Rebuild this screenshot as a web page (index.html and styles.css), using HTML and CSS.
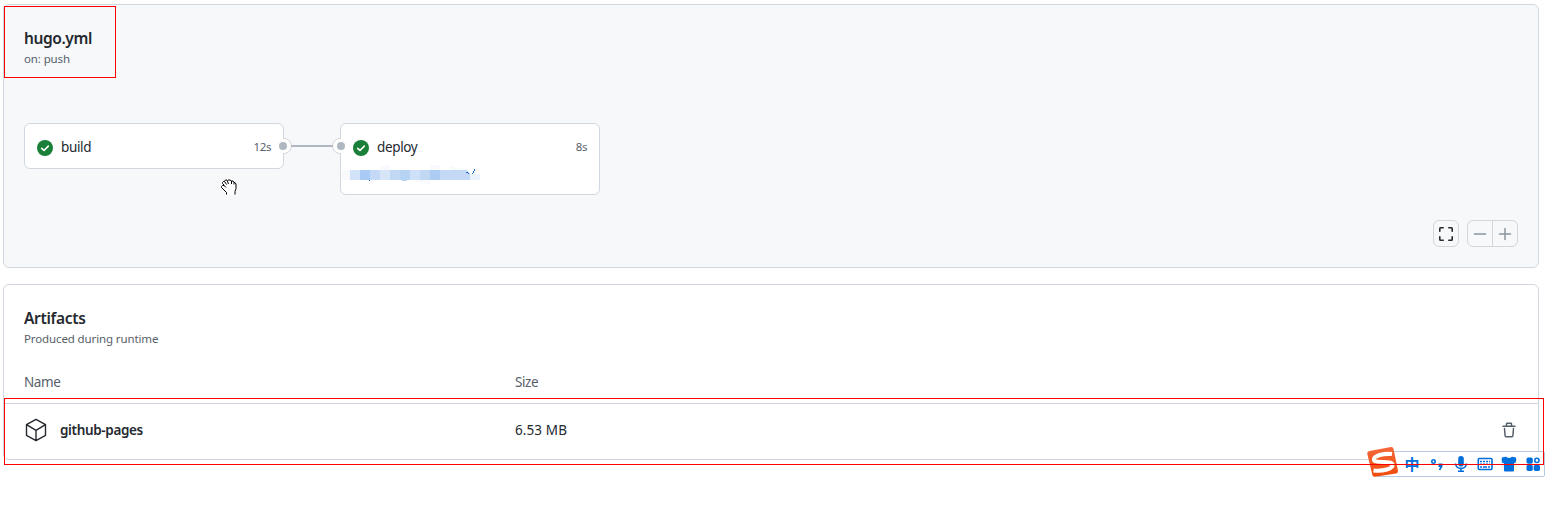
FILE: index.html
```html
<!DOCTYPE html>
<html lang="en">
<head>
<meta charset="utf-8">
<title>Workflow run</title>
<link rel="stylesheet" href="styles.css">
</head>
<body>
<main class="page">
  <section class="panel workflow">
    <header>
      <h2 class="title title-file">hugo.yml</h2>
      <p class="subtitle">on: push</p>
    </header>
    <div class="graph">
      <div class="job">
        <div class="job-row">
          <svg class="check" viewBox="0 0 16 16"><circle cx="8" cy="8" r="8" fill="#1a7f37"/><path d="M4.7 8.3 7 10.5l4.3-4.4" fill="none" stroke="#fff" stroke-width="1.6" stroke-linecap="round" stroke-linejoin="round"/></svg>
          <span class="job-name">build</span><span class="time">12s</span>
        </div>
      </div>
      <svg class="connector" viewBox="0 0 72 18">
        <path d="M8 1.5A7.5 7.5 0 0 1 8 16.5M64 1.5A7.5 7.5 0 0 0 64 16.5" fill="#fff" stroke="#d0d7de"/>
        <path d="M6 2h2v14H6zM64 2h2v14h-2z" fill="#fff"/>
        <path d="M15 9h42" stroke="#afb8c1" stroke-width="2"/>
        <circle cx="7" cy="9" r="4" fill="#afb8c1"/><circle cx="65" cy="9" r="4" fill="#afb8c1"/>
      </svg>
      <div class="job job-deploy">
        <div class="job-row">
          <svg class="check" viewBox="0 0 16 16"><circle cx="8" cy="8" r="8" fill="#1a7f37"/><path d="M4.7 8.3 7 10.5l4.3-4.4" fill="none" stroke="#fff" stroke-width="1.6" stroke-linecap="round" stroke-linejoin="round"/></svg>
          <span class="job-name">deploy</span><span class="time">8s</span>
        </div>
        <svg class="masked" viewBox="0 0 140 22" shape-rendering="crispEdges">
          <path d="M2 6h8v10H2zM40 3l10-3v6H40zM90 1h10v5H90zM110 2l20 4h-20zM70 16h20v5z" fill="#f8fafe"/>
          <path d="M10 6h10v10H10z" fill="#d1e2f9"/><path d="M20 6h10v10H20z" fill="#a9caf4"/>
          <path d="M30 6h10v10H30z" fill="#c3d9f6"/><path d="M40 6h10v10H40z" fill="#d7e5f9"/>
          <path d="M50 6h10v10H50z" fill="#c1d8f5"/><path d="M60 6h10v10H60z" fill="#b6d3f4"/>
          <path d="M70 6h10v10H70z" fill="#cfe1f8"/><path d="M80 6h10v10H80z" fill="#c1d8f5"/>
          <path d="M90 6h10v10H90z" fill="#adccf4"/><path d="M100 6h26l4 4v6h-30z" fill="#c3d9f6"/>
          <path d="M130 10h10v6h-10z" fill="#eaf2fd"/><path d="M62 16h5v1h-5z" fill="#b6d3f4"/>
          <path d="M29 16h1v1h-1zM126 8h2v1h-2zM128 9h1v1h-1zM132 9h1v1h-1zM133 7h1v2h-1zM134 5h1v2h-1z" fill="#1769c5"/>
        </svg>
      </div>
    </div>
    <div class="controls">
      <div class="control"><svg viewBox="0 0 16 16"><path d="M1.8 5.2V2.500q0-.7.7-.7h2.700M10.800 1.800h2.700q.7 0 .7.7v2.700M14.200 10.800v2.700q0 .7-.7.7h-2.700M5.200 14.200H2.500q-.7 0-.7-.7v-2.700" fill="none" stroke="#24292f" stroke-width="1.6" stroke-linecap="round"/></svg></div>
      <div class="zoom">
        <div class="zoom-cell"><svg viewBox="0 0 16 16"><path d="M2.500 8h11" stroke="#8c959f" stroke-width="1.5" stroke-linecap="round"/></svg></div>
        <div class="zoom-cell"><svg viewBox="0 0 16 16"><path d="M2.500 8h11M8 2.500v11" stroke="#8c959f" stroke-width="1.5" stroke-linecap="round"/></svg></div>
      </div>
    </div>
  </section>

  <section class="panel artifacts">
    <header class="artifact-head">
      <h2 class="title">Artifacts</h2>
      <p class="subtitle">Produced during runtime</p>
    </header>
    <div class="row row-head"><span class="col-name">Name</span><span class="col-size">Size</span></div>
    <div class="row row-item">
      <div class="col-name item">
        <svg class="cube" viewBox="0 0 24 24"><path d="M12 1.300 21.500 6.600v10.800L12 22.700 2.500 17.400V6.600zM2.500 6.600 12 12.300l9.500-5.700M12 12.300v10.400" fill="none" stroke="#24292f" stroke-width="1.4" stroke-linejoin="round"/></svg>
        <strong class="item-name">github-pages</strong>
      </div>
      <span class="item-size">6.53 MB</span>
      <svg class="trash" viewBox="0 0 16 16"><path d="M2 4.300h12M5.500 4V1.800q0-.6.600-.6h3.800q.6 0 .6.600V4M3.500 6.500l.6 7.200q.1 1 1 1h5.800q.9 0 1-1l.6-7.200" fill="none" stroke="#57606a" stroke-width="1.5" stroke-linecap="round"/></svg>
    </div>
  </section>
</main>

<svg class="cursor" viewBox="0 0 16 17">
  <path d="M5.500 15.500v-2l-5-5v-1l1-1h1l-1-2v-1l1-1h1l.5-1 1-1h1.500l1-.5h2l1 1 2 .5.5 1.500 1.500.5.500 1.500v4l-1 3v3.500z" fill="#fff"/>
  <path d="M5.500 15.500v-2l-5-5v-1l1-1h1.500l2 2M3.500 6.500l-2-2v-1l1-1h1l2 3M3.500 2.500l1-1.500h1.500l1.500 4M7 1h2l1.500 1v3M10.500 2h1.500l1 1.500v2M13 3.500h1l1 1.500v4.500l-1 3v3" fill="none" stroke="#000" stroke-width="1"/>
</svg>

<div class="ime">
  <span class="ime-lang">中</span>
  <svg class="ime-icon" viewBox="0 0 16 16"><circle cx="4.500" cy="5.500" r="1.700"/><path class="fill" d="M9.500 7.500h4v3l-2 3.500H9.800l1.200-3H9.500z"/></svg>
  <svg class="ime-icon" viewBox="0 0 16 16"><rect class="fill" x="5.200" y="0" width="5.600" height="10.500" rx="2.800"/><path d="M2.500 7.500q.7 4.900 5.500 4.900t5.500-4.900M8 12v3M5 15.200h6"/></svg>
  <svg class="ime-icon" viewBox="0 0 16 16"><rect x="1.300" y="2.500" width="13.700" height="11" rx="1"/><path d="M3 5.500h10M3 8.200h10" stroke-dasharray="2 1"/><path d="M3 11h2M6 11h4M11 11h2"/></svg>
  <svg class="ime-icon ime-shirt" viewBox="0 0 16 16"><path class="fill" d="m1 1.500 4-.8q3 2.800 6 0l4 .8q1 3-.6 5.500H13v7.500q0 1-1 1H4q-1 0-1-1V7H1.500Q0 4.500 1 1.500z"/></svg>
  <svg class="ime-icon" viewBox="0 0 16 16"><rect class="fill" x="1.500" y="1.500" width="6.300" height="6.300" rx="1.800"/><rect x="9.800" y="2.300" width="4.200" height="4.200" rx="2"/><rect class="fill" x="1.500" y="8.700" width="6.300" height="6.300" rx="1.800"/><rect class="fill" x="8.700" y="8.700" width="6.300" height="6.300" rx="1.800"/></svg>
</div>
<svg class="ime-logo" viewBox="0 0 34 32">
  <defs><linearGradient id="flame" x1="0" y1="0" x2="0" y2="1"><stop offset="0" stop-color="#f5683b"/><stop offset="1" stop-color="#f04b0c"/></linearGradient></defs>
  <path d="m3.500 5 21.500-4q2-.3 2.500 1.700l4.500 22q.4 2.300-1.800 2.800L9 30.800q-2 .3-2.600-1.800L1.300 8Q1 5.500 3.500 5z" fill="url(#flame)"/>
  <path d="M26 8C17 7 8 10 8 13.500c0 4.500 18 .5 18.500 5C27 23 17 25.500 7.500 24.500" fill="none" stroke="#fff" stroke-width="4.200"/>
</svg>
<div class="mark mark-title"></div>
<div class="mark mark-artifact"></div>
</body>
</html>
```
FILE: styles.css
```css
* { box-sizing: border-box; }
body {
  margin: 0;
  height: 510px;
  overflow: hidden;
  background: #fff;
  color: #24292f;
  font: 13.5px/20px "Noto Sans", "Open Sans", sans-serif;
}
svg { display: block; flex: none; }
.page { display: flex; flex-direction: column; gap: 16px; padding: 4px 12px 0 3px; }
.panel { border: 1px solid #d0d7de; border-radius: 6px; }
.workflow { height: 264px; padding: 21px 20px 20px; background: #f6f8fa; display: flex; flex-direction: column; }
.title { margin: 0; font-size: 15.5px; line-height: 24px; font-weight: 600; letter-spacing: -.3px; }
.title-file { letter-spacing: -.4px; }
.subtitle { margin: 0; font-size: 11.5px; line-height: 18px; letter-spacing: -.12px; color: #57606a; }
.graph { display: flex; align-items: flex-start; margin-top: 55px; }
.job { width: 260px; height: 46px; border: 1px solid #d0d7de; border-radius: 6px; background: #fff; padding: 12px 12px 0; }
.job-deploy { height: 72px; }
.job-row { display: flex; align-items: center; height: 21px; }
.check { width: 16px; height: 16px; margin-top: 3px; }
.job-name { margin-left: 8px; letter-spacing: -.35px; }
.time { margin-left: auto; font-size: 11.5px; letter-spacing: -.4px; color: #57606a; }
.connector { width: 72px; height: 18px; margin: 14px -8px 0; position: relative; z-index: 1; }
.masked { width: 140px; height: 22px; margin: 7px 0 0 -13px; }
.controls { display: flex; justify-content: flex-end; gap: 8px; margin-top: auto; }
.control, .zoom { display: flex; align-items: center; justify-content: center; height: 27px; border: 1px solid #d3d6da; border-radius: 6px; }
.control { width: 26px; }
.control svg, .zoom svg { width: 16px; height: 16px; }
.zoom { width: 51px; }
.zoom-cell { flex: 1; height: 25px; display: flex; align-items: center; justify-content: center; }
.zoom-cell + .zoom-cell { border-left: 1px solid #d3d6da; }
.artifacts { height: 176px; padding-top: 21px; }
.artifact-head { padding: 0 20px; }
.row { display: flex; align-items: center; padding: 0 20px; }
.row-head { height: 55px; padding-top: 13px; color: #57606a; letter-spacing: -.4px; }
.row-item { height: 57px; border-top: 1px solid #d0d7de; padding-bottom: 5px; }
.col-name { width: 491px; }
.item { display: flex; align-items: center; gap: 12px; }
.item-name { font-weight: 600; letter-spacing: -.35px; }
.item-size { letter-spacing: .1px; }
.cube { width: 24px; height: 24px; }
.trash { width: 16px; height: 16px; margin-left: auto; margin-right: 1px; }
.cursor { position: absolute; left: 221px; top: 179px; width: 16px; height: 17px; }
.ime { position: absolute; left: 1376px; top: 451px; width: 169px; height: 26px; display: flex; align-items: center; gap: 8px; padding-left: 27.5px; background: #fff; border: 1px solid #b6c9e2; border-radius: 2px; }
.ime-lang { width: 16px; font: 700 15px/20px "Noto Sans CJK SC", sans-serif; color: #006edb; }
.ime-icon { width: 16px; height: 16px; fill: none; stroke: #006edb; stroke-width: 1.6; }
.ime-icon .fill { fill: #006edb; stroke: none; }
.ime-shirt { background: radial-gradient(circle at 80% 60%, #fff0c8, transparent 60%), radial-gradient(circle at 10% 40%, #d9eefb, transparent 60%); }
.ime-logo { position: absolute; left: 1366px; top: 446px; width: 34px; height: 32px; }
.mark { position: absolute; border: 1px solid #f00; }
.mark-title { left: 4px; top: 6px; width: 112px; height: 72px; }
.mark-artifact { left: 4px; top: 398px; width: 1540px; height: 67px; }
```
